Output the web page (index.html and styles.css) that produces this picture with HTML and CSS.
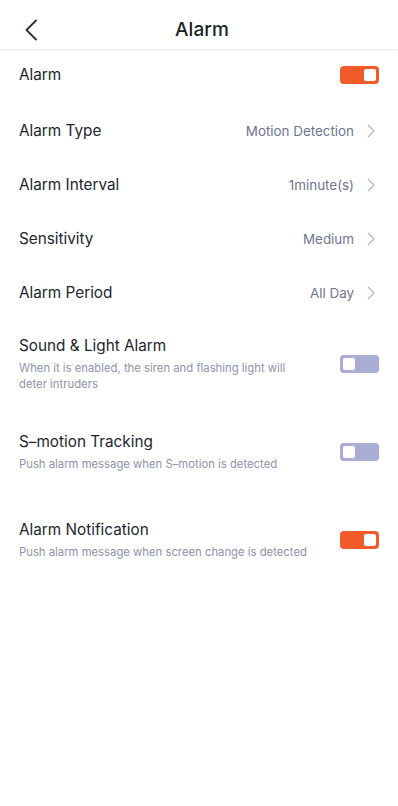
FILE: index.html
```html
<!DOCTYPE html>
<html>
<head>
<meta charset="utf-8">
<link rel="stylesheet" href="styles.css">
</head>
<body>
<header class="topbar">
  <span class="back">
    <svg width="14" height="22" viewBox="0 0 14 22"><path d="M12 1.5 L2.5 11 L12 20.5" fill="none" stroke="#2a2d36" stroke-width="1.8" stroke-linecap="round" stroke-linejoin="round"/></svg>
  </span>
  <h1 class="title">Alarm</h1>
</header>
<main class="list">
  <div class="row row-first">
    <span class="label">Alarm</span>
    <span class="toggle on"><span class="knob"></span></span>
  </div>
  <div class="row">
    <span class="label">Alarm Type</span>
    <span class="value">Motion Detection</span>
    <svg class="chev" width="8" height="14" viewBox="0 0 8 14"><path d="M1 1 L7 7 L1 13" fill="none" stroke="#b4b7c4" stroke-width="1.2"/></svg>
  </div>
  <div class="row">
    <span class="label">Alarm Interval</span>
    <span class="value">1minute(s)</span>
    <svg class="chev" width="8" height="14" viewBox="0 0 8 14"><path d="M1 1 L7 7 L1 13" fill="none" stroke="#b4b7c4" stroke-width="1.2"/></svg>
  </div>
  <div class="row">
    <span class="label">Sensitivity</span>
    <span class="value">Medium</span>
    <svg class="chev" width="8" height="14" viewBox="0 0 8 14"><path d="M1 1 L7 7 L1 13" fill="none" stroke="#b4b7c4" stroke-width="1.2"/></svg>
  </div>
  <div class="row">
    <span class="label">Alarm Period</span>
    <span class="value">All Day</span>
    <svg class="chev" width="8" height="14" viewBox="0 0 8 14"><path d="M1 1 L7 7 L1 13" fill="none" stroke="#b4b7c4" stroke-width="1.2"/></svg>
  </div>
  <div class="block">
    <div class="text">
      <div class="label">Sound &amp; Light Alarm</div>
      <div class="desc">When it is enabled, the siren and flashing light will deter intruders</div>
    </div>
    <span class="toggle off"><span class="knob"></span></span>
  </div>
  <div class="block">
    <div class="text">
      <div class="label">S–motion Tracking</div>
      <div class="desc">Push alarm message when S–motion is detected</div>
    </div>
    <span class="toggle off"><span class="knob"></span></span>
  </div>
  <div class="block">
    <div class="text">
      <div class="label">Alarm Notification</div>
      <div class="desc">Push alarm message when screen change is detected</div>
    </div>
    <span class="toggle on"><span class="knob"></span></span>
  </div>
</main>
</body>
</html>
```
FILE: styles.css
```css
* { box-sizing: border-box; }
html, body { margin: 0; padding: 0; background: #fff; }
body {
  font-family: Inter, "Noto Sans", "Liberation Sans", sans-serif;
  color: #1f222b;
  width: 398px;
}
.topbar {
  height: 50px;
  position: relative;
  display: flex;
  align-items: center;
  justify-content: center;
  border-bottom: 1px solid #eef0f3;
  box-shadow: 0 1px 2px rgba(0,0,0,0.04);
}
.back {
  position: absolute;
  left: 24px;
  top: 19px;
  display: flex;
}
.title {
  margin: 0;
  font-size: 19px;
  font-weight: 500;
  color: #1b1e27;
  letter-spacing: 0.1px;
  padding-left: 6px;
  padding-top: 9px;
}
.list {
  padding: 0 19px;
}
.row {
  height: 54px;
  display: flex;
  align-items: center;
}
.row-first {
  height: 50px;
  margin-bottom: 4px;
}
.label {
  font-size: 15.3px;
  color: #22252e;
  flex: 1;
  line-height: 20px;
}
.value {
  font-size: 13.4px;
  color: #6f7490;
  margin-right: 13px;
}
.chev { margin-right: 4px; }
.block {
  height: 88px;
  display: flex;
  align-items: center;
}
.block .text { flex: 1; padding-right: 24px; }
.desc {
  font-size: 11.3px;
  color: #8e93aa;
  line-height: 16px;
  margin-top: 4px;
}
.toggle {
  width: 39px;
  height: 18px;
  border-radius: 4px;
  display: flex;
  align-items: center;
  padding: 0 3px;
  flex-shrink: 0;
}
.toggle.on { background: #f15a29; justify-content: flex-end; }
.toggle.off { background: #a9acd5; justify-content: flex-start; }
.knob {
  width: 12px;
  height: 12px;
  background: #fff;
  border-radius: 2px;
}
```
